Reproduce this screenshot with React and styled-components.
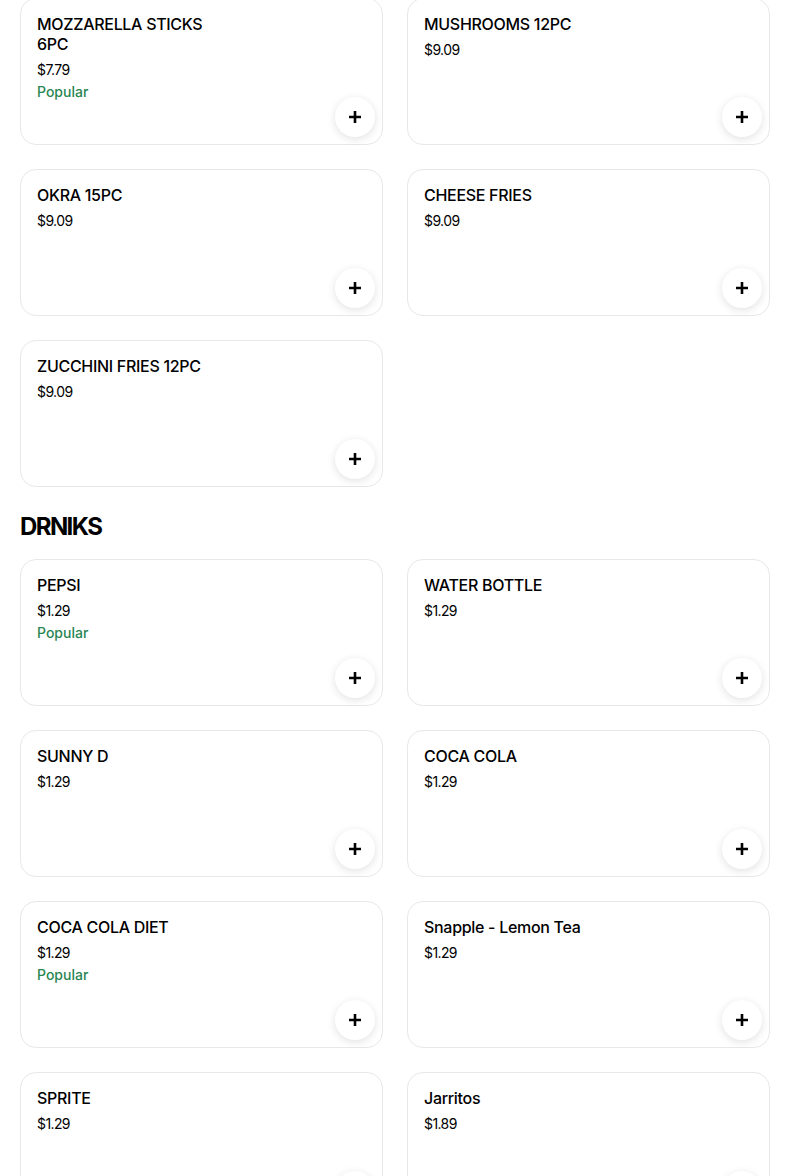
import React from 'react'
import styled, { createGlobalStyle } from 'styled-components'

const GlobalStyle = createGlobalStyle`
  html, body {
    margin: 0;
    padding: 0;
    background: #ffffff;
    font-family: Inter, "Noto Sans", "Liberation Sans", sans-serif;
    color: #000000;
  }
`

const Page = styled.div`
  padding: 0 34px 0 20px;
  margin-top: -2px;
`

const Section = styled.section`
  display: flex;
  flex-direction: column;
`

const SectionTitle = styled.h2`
  margin: 24px 0 16px;
  font-size: 24px;
  line-height: 32px;
  font-weight: 700;
  letter-spacing: -1.6px;
`

const Grid = styled.div`
  display: grid;
  grid-template-columns: repeat(2, 1fr);
  gap: 24px;
`

const Card = styled.div`
  position: relative;
  box-sizing: border-box;
  height: 147px;
  padding: 15px 16px 16px;
  border: 1px solid #e8e8e8;
  border-radius: 16px;
  display: flex;
  flex-direction: column;
  background: #fff;
`

const Title = styled.div`
  max-width: 190px;
  font-size: 16px;
  line-height: 20px;
  font-weight: 450;
  letter-spacing: -0.3px;
`

const Price = styled.div`
  margin-top: 5px;
  font-size: 14px;
  line-height: 22px;
  letter-spacing: -0.6px;
  color: #000;
`

const Badge = styled.div`
  font-size: 14px;
  line-height: 22px;
  font-weight: 500;
  color: #2a8652;
`

const AddButton = styled.button`
  position: absolute;
  right: 7px;
  bottom: 7px;
  width: 40px;
  height: 40px;
  border: none;
  border-radius: 50%;
  background: #fff;
  box-shadow: 0 2px 8px rgba(0, 0, 0, 0.12);
  display: flex;
  align-items: center;
  justify-content: center;
  padding: 0;
  cursor: pointer;
`

const PlusIcon = () => (
  <svg width="14" height="14" viewBox="0 0 14 14">
    <path d="M7 1v12M1 7h12" stroke="#000" strokeWidth="2.6" />
  </svg>
)

const sides = [
  { name: 'MOZZARELLA STICKS 6PC', price: '$7.79', popular: true },
  { name: 'MUSHROOMS 12PC', price: '$9.09' },
  { name: 'OKRA 15PC', price: '$9.09' },
  { name: 'CHEESE FRIES', price: '$9.09' },
  { name: 'ZUCCHINI FRIES 12PC', price: '$9.09' },
]

const drinks = [
  { name: 'PEPSI', price: '$1.29', popular: true },
  { name: 'WATER BOTTLE', price: '$1.29' },
  { name: 'SUNNY D', price: '$1.29' },
  { name: 'COCA COLA', price: '$1.29' },
  { name: 'COCA COLA DIET', price: '$1.29', popular: true },
  { name: 'Snapple - Lemon Tea', price: '$1.29' },
  { name: 'SPRITE', price: '$1.29' },
  { name: 'Jarritos', price: '$1.89' },
]

const MenuItem = ({ item }) => (
  <Card>
    <Title>{item.name}</Title>
    <Price>{item.price}</Price>
    {item.popular && <Badge>Popular</Badge>}
    <AddButton aria-label="Add">
      <PlusIcon />
    </AddButton>
  </Card>
)

export default function App() {
  return (
    <>
      <GlobalStyle />
      <Page>
        <Section>
          <Grid>
            {sides.map(item => <MenuItem key={item.name} item={item} />)}
          </Grid>
        </Section>
        <Section>
          <SectionTitle>DRNIKS</SectionTitle>
          <Grid>
            {drinks.map(item => <MenuItem key={item.name} item={item} />)}
          </Grid>
        </Section>
      </Page>
    </>
  )
}
